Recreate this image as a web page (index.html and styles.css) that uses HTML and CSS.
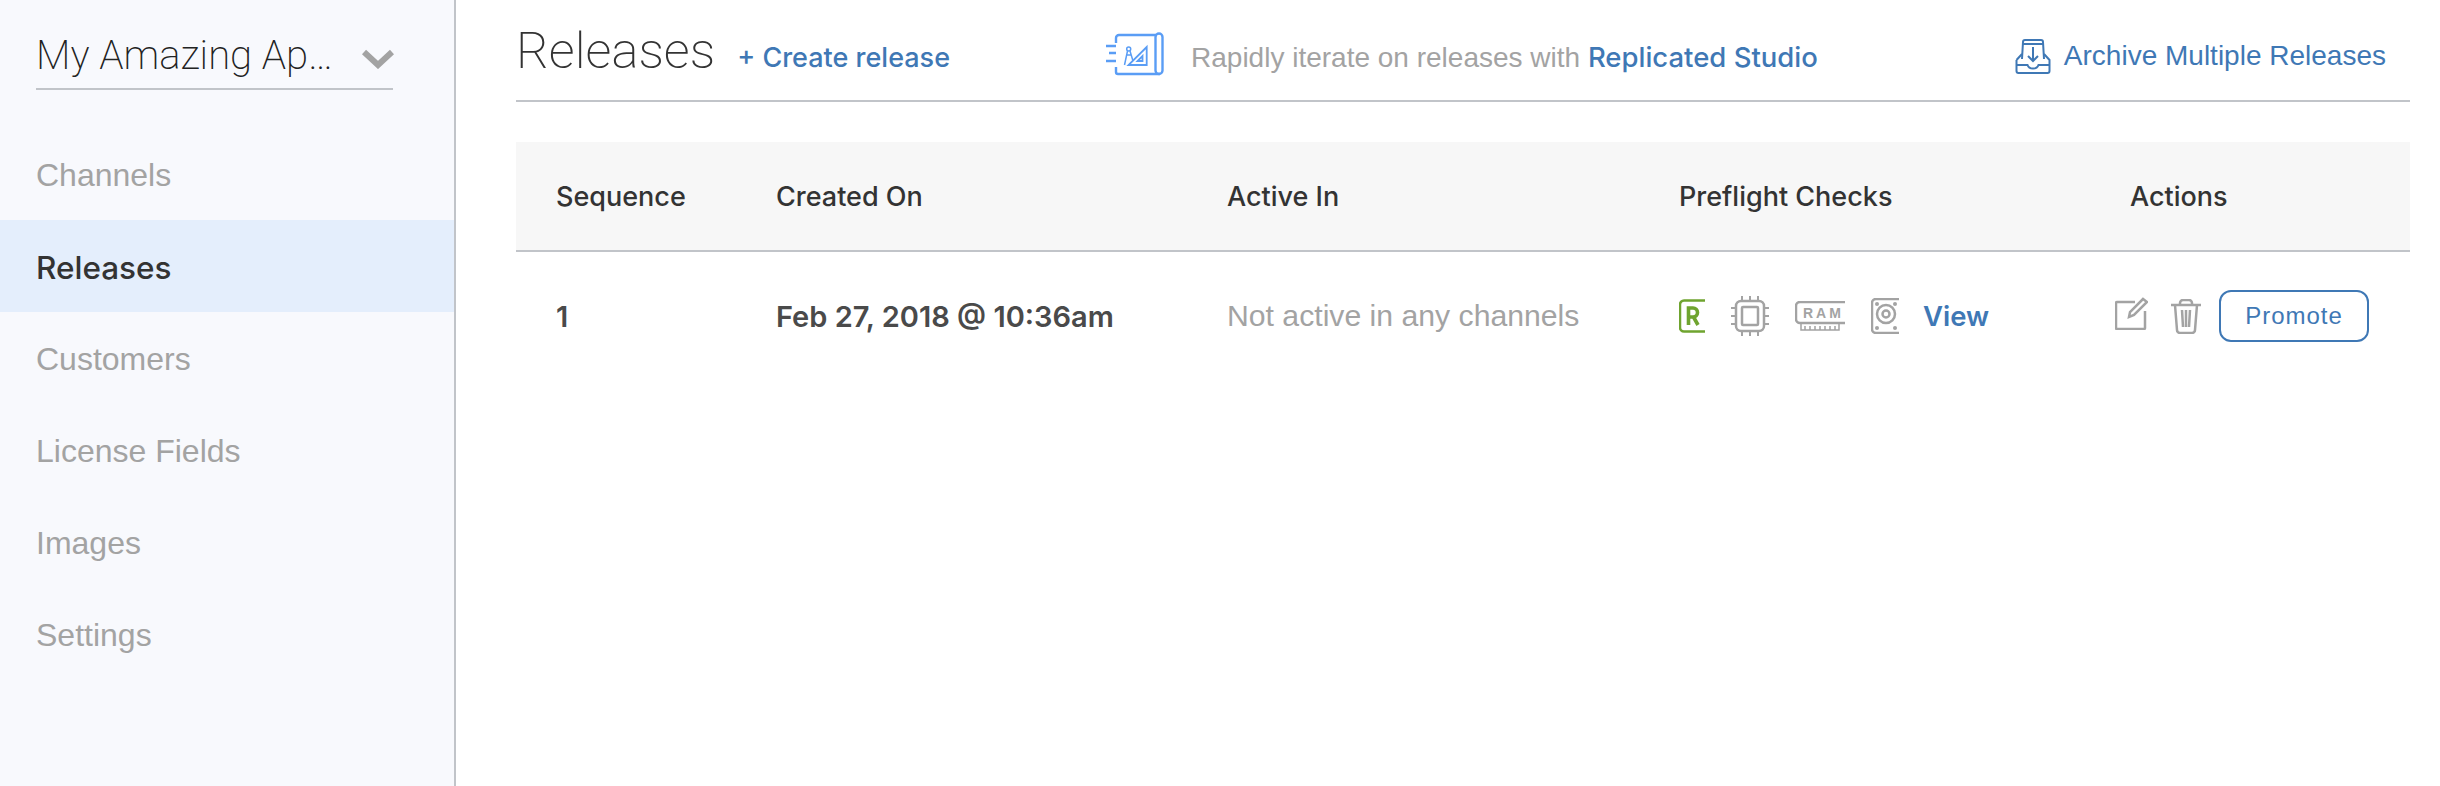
FILE: index.html
```html
<!DOCTYPE html>
<html lang="en">
<head>
  <meta charset="UTF-8" />
  <title>Releases</title>
  <link rel="stylesheet" href="styles.css">
</head>
<body>

<aside class="sidebar">
  <div class="app-select">
    <span class="app-name">My Amazing Ap…</span>
    <svg class="chevron" width="32" height="20" viewBox="0 0 32 20"><path d="M2 3l14 13L30 3" fill="none" stroke="#a3a3a3" stroke-width="6"/></svg>
  </div>
  <nav class="nav">
    <a class="nav-item">Channels</a>
    <a class="nav-item active">Releases</a>
    <a class="nav-item">Customers</a>
    <a class="nav-item">License Fields</a>
    <a class="nav-item">Images</a>
    <a class="nav-item">Settings</a>
  </nav>
</aside>

<main class="content">
  <header class="page-header">
    <h1>Releases</h1>
    <a class="link create">+ Create release</a>
    <div class="promo">
      <svg width="60" height="44" viewBox="0 0 58 44" fill="none" stroke="#5a9df5" stroke-width="2.4">
        <path d="M0 14h10M3 21h7M0 29h10"/>
        <path d="M10 11V6a3 3 0 0 1 3-3h37M10 35v5a2 2 0 0 0 2 2h42"/>
        <rect x="49.500" y="1.500" width="7" height="40.500" rx="3.500"/>
        <path d="M40.700 15v18H22.500zM36.500 24v5h-5z" stroke-width="1.800"/>
        <circle cx="22.700" cy="17" r="2" stroke-width="1.500"/>
        <path d="M21.500 19l-3 14M24 19l3 10M20 23h5" stroke-width="1.500"/>
      </svg>
      <span class="promo-text">Rapidly iterate on releases with <a class="link">Replicated Studio</a></span>
    </div>
    <a class="link archive">
      <svg width="36" height="36" viewBox="0 0 36 36" fill="none" stroke="#3f78b5" stroke-width="2">
        <path d="M7 21L8 4a2 2 0 0 1 2-2h16a2 2 0 0 1 2 2l1 17"/>
        <path d="M8 6h20"/>
        <path d="M1.500 22v11a2 2 0 0 0 2 2h29a2 2 0 0 0 2-2V22L29 16M1.500 22L7 16M1.500 27h11c1 3 3 3.500 5.500 3.500s4.500-.5 5.500-3.500h11"/>
        <path d="M18 9v13M13 18l5 5 5-5"/>
      </svg>
      Archive Multiple Releases
    </a>
  </header>

  <div class="table">
    <div class="row head">
      <div>Sequence</div>
      <div>Created On</div>
      <div>Active In</div>
      <div>Preflight Checks</div>
      <div class="actions-title">Actions</div>
    </div>
    <div class="row body">
      <div class="strong">1</div>
      <div class="strong">Feb 27, 2018 @ 10:36am</div>
      <div class="muted">Not active in any channels</div>
      <div class="checks">
        <svg width="26" height="34" viewBox="0 0 26 34" fill="none" stroke="#6fa42f" stroke-width="2.500">
          <path d="M26 1.500H5a4 4 0 0 0-4 4v23a4 4 0 0 0 4 4h21"/>
          <path d="M9.500 26V9h4.500a4.500 4.500 0 0 1 0 9H9.500M14.500 18l4.500 8" stroke-width="3.600"/>
        </svg>
        <svg class="gap-chip" width="38" height="40" viewBox="0 0 38 40" fill="none" stroke="#a3a3a3" stroke-width="2.500">
          <rect x="5" y="5" width="28" height="30" rx="5"/>
          <rect x="11" y="11" width="16" height="18" rx="1"/>
          <path d="M11 0v5M19 0v5M27 0v5M11 35v5M19 35v5M27 35v5M0 12h5M0 20h5M0 28h5M33 12h5M33 20h5M33 28h5" stroke-width="2"/>
        </svg>
        <svg class="gap-ram" width="50" height="31" viewBox="0 0 50 31" fill="none" stroke="#a3a3a3" stroke-width="2.500">
          <path d="M50 1H5a4 4 0 0 0-4 4v13a4 4 0 0 0 4 4h45"/>
          <path d="M6 22v7h38v-7M10 25v4M15 25v4M20 25v4M25 25v4M30 25v4M35 25v4M40 25v4" stroke-width="1.500"/>
          <text x="8" y="16.500" class="ram-label">RAM</text>
        </svg>
        <svg class="gap-disk" width="28" height="36" viewBox="0 0 28 36" fill="none" stroke="#a3a3a3" stroke-width="2.500">
          <path d="M28 1H5a4 4 0 0 0-4 4v26a4 4 0 0 0 4 4h23"/>
          <circle cx="15" cy="16" r="9"/>
          <circle cx="15" cy="16" r="3.500"/>
          <g fill="#a3a3a3" stroke="none">
            <circle cx="6" cy="6" r="2"/><circle cx="24" cy="6" r="2"/><circle cx="6" cy="30" r="2"/><circle cx="24" cy="30" r="2"/>
          </g>
        </svg>
        <a class="link view">View</a>
      </div>
      <div class="actions">
        <svg class="edit" width="33" height="33" viewBox="0 0 33 33" fill="none" stroke="#a3a3a3" stroke-width="2.500">
          <path d="M20 5H2a1 1 0 0 0-1 1v25a1 1 0 0 0 1 1h27a1 1 0 0 0 1-1V14"/>
          <path d="M14 20l1-5L28 2l4 3-13 13z"/>
        </svg>
        <svg class="gap-trash" width="30" height="35" viewBox="0 0 30 35" fill="none" stroke="#a3a3a3" stroke-width="2.500">
          <path d="M0 6h30M9 6V4a3 3 0 0 1 3-3h6a3 3 0 0 1 3 3v2"/>
          <path d="M4 6l2 25a3 3 0 0 0 3 3h12a3 3 0 0 0 3-3l2-25M11 11l1 17M15 11v17M19 11l-1 17"/>
        </svg>
        <button class="promote">Promote</button>
      </div>
    </div>
  </div>
</main>

</body>
</html>
```

FILE: styles.css
```css
body {
  margin: 0;
  height: 786px;
  display: flex;
  overflow: hidden;
  font-family: "Liberation Sans", Arial, sans-serif;
  color: #333;
  background: white;
}

.sidebar {
  width: 454px;
  flex: none;
  background-color: #f8f9fd;
  border-right: 2px solid #c1c4c9;
}
.app-select {
  margin: 24px 61px 0 36px;
  height: 64px;
  display: flex;
  align-items: center;
  justify-content: space-between;
  border-bottom: 2px solid #c1c4c9;
}
.app-name {
  margin-bottom: 2px;
  font-family: Roboto, sans-serif;
  font-weight: 200;
  font-size: 40px;
  color: #222;
}
.chevron {
  margin: 6px -1px 0 0;
}
.nav {
  margin-top: 38px;
}
.nav-item {
  display: block;
  height: 92px;
  line-height: 95px;
  padding-left: 36px;
  font-size: 32px;
  color: #a3a3a3;
}
.nav-item.active {
  background-color: #e4eefc;
  color: #333;
  font-family: Inter, sans-serif;
  font-weight: 500;
  font-size: 31.500px;
}

.content {
  flex: 1;
  padding: 0 30px 0 60px;
}
.page-header {
  height: 100px;
  display: flex;
  align-items: center;
  border-bottom: 2px solid #c1c4c9;
}
h1 {
  margin: 0;
  font-family: Roboto, sans-serif;
  font-weight: 200;
  font-size: 50.800px;
  color: #333;
}
.link {
  color: #3f78b5;
}
.create {
  margin: 14px 0 0 22px;
  font-family: Inter, sans-serif;
  font-weight: 500;
  font-size: 27px;
}
.promo {
  margin: 8px 0 0 155px;
  display: flex;
  align-items: center;
  gap: 26px;
}
.promo-text {
  font-size: 28px;
  color: #a3a3a3;
  margin-top: 6px;
}
.promo-text .link {
  font-family: Inter, sans-serif;
  font-weight: 500;
  font-size: 27.500px;
}
.archive {
  margin: 12px 24px 0 auto;
  display: flex;
  align-items: center;
  gap: 13px;
  font-size: 28px;
}

.table {
  margin-top: 40px;
}
.row {
  display: grid;
  grid-template-columns: 220px 451px 452px 451px 1fr;
  padding-left: 40px;
  align-items: center;
}
.head {
  height: 108px;
  background-color: #f7f7f7;
  border-bottom: 2px solid #c1c4c9;
  font-family: Inter, sans-serif;
  font-weight: 500;
  font-size: 27px;
  color: #333;
}
.body {
  height: 128px;
  font-size: 30.200px;
}
.strong {
  font-family: Inter, sans-serif;
  font-weight: 600;
  font-size: 29px;
  color: #4a4a4a;
}
.muted {
  color: #a3a3a3;
}
.checks, .actions {
  display: flex;
  align-items: center;
}
.gap-chip {
  margin-left: 26px;
}
.gap-ram {
  margin-left: 26px;
}
.gap-disk {
  margin-left: 26px;
}
.ram-label {
  font-family: "Liberation Sans", sans-serif;
  font-weight: bold;
  font-size: 14px;
  letter-spacing: 3px;
  fill: #a3a3a3;
  stroke: none;
}
.view {
  margin-left: 24px;
  font-family: Inter, sans-serif;
  font-weight: 600;
  font-size: 27.500px;
}
.actions {
  margin-left: -15px;
}
.edit {
  margin-bottom: 5px;
}
.gap-trash {
  margin-left: 23px;
}
.promote {
  margin-left: 18px;
  width: 150px;
  height: 52px;
  background: white;
  border: 2px solid #3f78b5;
  border-radius: 12px;
  color: #3f78b5;
  font-family: "Liberation Sans", sans-serif;
  font-size: 24px;
  letter-spacing: 1px;
}
```
